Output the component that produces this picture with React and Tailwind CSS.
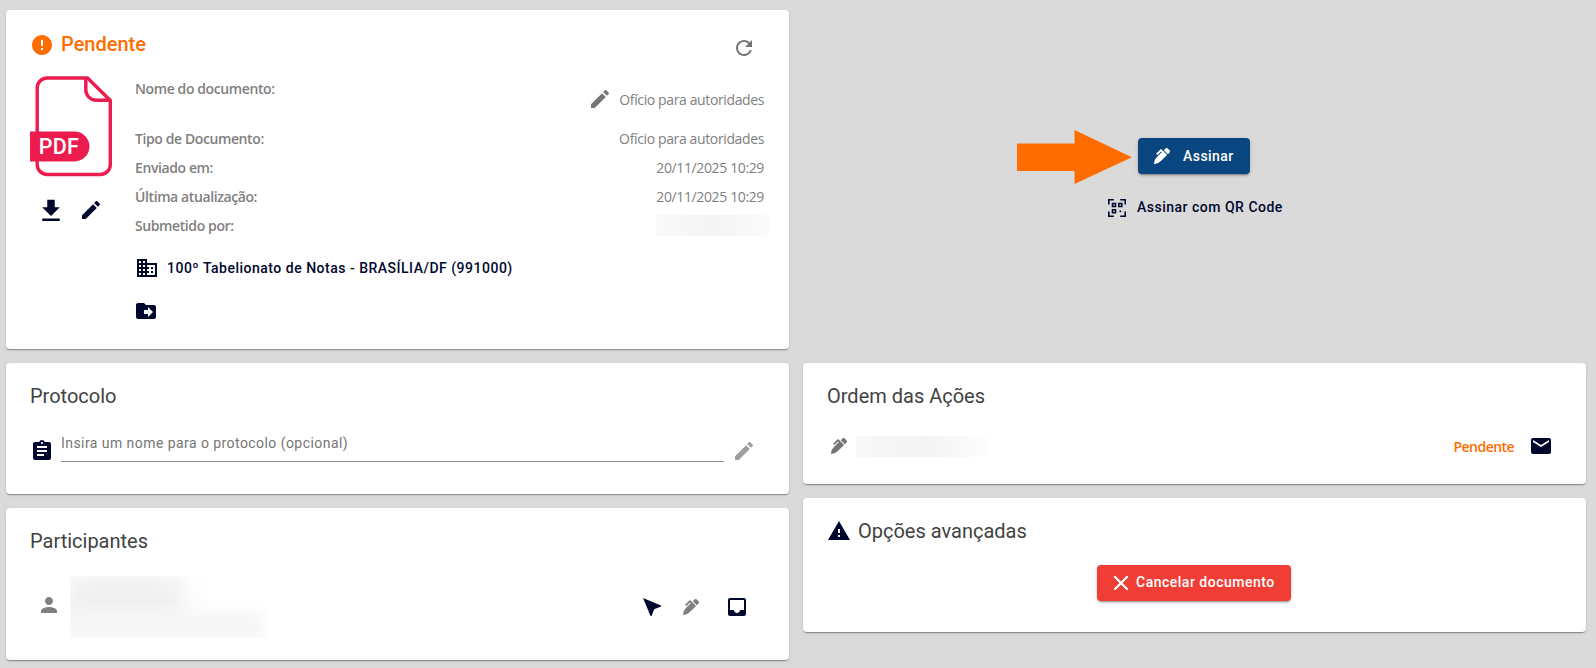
import React from 'react';
import {
    MdError, MdRefresh, MdEdit, MdGetApp, MdBusiness, MdDriveFileMove, MdAssignment,
    MdPerson, MdNearMe, MdInbox, MdMail, MdWarning
} from 'react-icons/md';
import { FaPenAlt } from 'react-icons/fa';

const Card = ({ className = '', children }) => (
    <section className={`rounded-[4px] bg-white shadow-[0_2px_1px_-1px_rgba(0,0,0,0.2),0_1px_1px_0_rgba(0,0,0,0.14),0_1px_3px_0_rgba(0,0,0,0.12)] ${className}`}>
        {children}
    </section>
);

const PdfIcon = () => (
    <svg width="83" height="101" viewBox="0 0 83 101" className="block">
        <path d="M57.5 2H17A10 10 0 0 0 7.2 12V88.5A10 10 0 0 0 17 98.5H70.5A10 10 0 0 0 80.3 88.5V24.5Z" fill="none" stroke="#ec1c4e" strokeWidth="3.4" />
        <path d="M55.8 2V13.5A10.5 10.5 0 0 0 66.3 24.3H80.5" fill="none" stroke="#ec1c4e" strokeWidth="3.4" />
        <path d="M0 55.5H44.5A15 15 0 0 1 44.5 85.5H0Z" fill="#ec1c4e" />
        <text x="8.8" y="78.2" fill="#fff" fontFamily="Roboto, sans-serif" fontSize="21.5" fontWeight="500" letterSpacing="0.2">PDF</text>
    </svg>
);

const QrScanIcon = () => (
    <svg width="18" height="18" viewBox="0 0 18 18" fill="none" stroke="currentColor" strokeWidth="1.6">
        <path d="M.8 5.5V.8H5.8M12.2.8h5V5.5M17.2 12.5v4.7H12.2M5.8 17.2H.8V12.5" />
        <path d="M4.5 4.5h3v3h-3zM10.8 4.5h3v3h-3zM4.5 10.8h3v3h-3z" />
        <path d="M11.4 12.3h1.8" />
    </svg>
);

const CloseIcon = () => (
    <svg width="24" height="24" viewBox="0 0 24 24" fill="none" stroke="currentColor" strokeWidth="2.3" strokeLinecap="round">
        <path d="M6 6L18 18M18 6L6 18" />
    </svg>
);

const Field = ({ label, children }) => (
    <div className="flex h-[29px] items-center justify-between">
        <span className="font-semibold tracking-[-0.4px]">{label}</span>
        {children}
    </div>
);

const DocumentCard = () => (
    <Card className="h-[339px] pt-[22px] pr-[25px] pl-6">
        <header className="flex h-6 items-center justify-between">
            <h2 className="flex items-center gap-[7px] text-[20px] font-medium text-[#ff6d00]">
                <MdError size={24} className="mt-[2px]" />
                Pendente
            </h2>
            <MdRefresh size={24} className="mt-[8px] mr-2 text-[#757575]" />
        </header>

        <div className="mt-5 flex">
            <div className="w-[105px] shrink-0">
                <PdfIcon />
                <div className="mt-[18px] flex items-center gap-[13px] pl-[6px] text-[#00072d]">
                    <MdGetApp size={30} className="mt-px -mb-px" />
                    <MdEdit size={24} />
                </div>
            </div>
            <div className="flex-1 font-['Open_Sans',sans-serif] text-[14px] text-[#808080]">
                <div className="flex h-12 justify-between leading-[26px]">
                    <span className="font-semibold tracking-[-0.4px]">Nome do documento:</span>
                    <span className="flex h-6 items-center gap-[7px] pt-[23px]">
                        <MdEdit size={24} className="-mt-[2px] text-[#757575]" />
                        <span className="tracking-[-0.38px]">Ofício para autoridades</span>
                    </span>
                </div>
                <div className="tracking-[-0.37px]">
                    <Field label="Tipo de Documento:">Ofício para autoridades</Field>
                    <Field label="Enviado em:">20/11/2025 10:29</Field>
                    <Field label="Última atualização:">20/11/2025 10:29</Field>
                    <Field label="Submetido por:">
                        <div className="-mr-[5px] h-[21px] w-[113px] bg-linear-to-r from-[#fafafa] via-[#f4f4f4] to-[#fbfbfb]" />
                    </Field>
                </div>
                <div className="mt-4 flex items-center gap-2 font-[Roboto,sans-serif] font-medium tracking-[0.5px] text-[#00072d]">
                    <MdBusiness size={24} />
                    <span>100º Tabelionato de Notas - BRASÍLIA/DF (991000)</span>
                </div>
                <MdDriveFileMove size={24} className="mt-[19px] -ml-px text-[#00072d]" />
            </div>
        </div>
    </Card>
);

const SignPanel = () => (
    <div className="flex h-[353px] flex-col pt-[120px]">
        <div className="flex items-start gap-[6px] pl-[214px]">
            <svg width="115" height="55" viewBox="0 0 115 55">
                <path d="M0 13.5H57.5V0L115 27.2L57.5 54V41H0Z" fill="#ff6d00" />
            </svg>
            <button className="mt-2 flex h-9 w-[112px] items-center gap-[13px] rounded-[4px] bg-[#09467f] pl-4 text-[14px] font-medium tracking-[0.45px] text-white shadow-[0_3px_1px_-2px_rgba(0,0,0,0.2),0_2px_2px_0_rgba(0,0,0,0.14),0_1px_5px_0_rgba(0,0,0,0.12)]">
                <FaPenAlt size={16} />
                Assinar
            </button>
        </div>
        <button className="mt-3 flex items-center gap-[11px] pl-[305px] text-[14px] font-medium tracking-[0.5px] text-[#00072d]">
            <QrScanIcon />
            Assinar com QR Code
        </button>
    </div>
);

const ProtocolCard = () => (
    <Card className="h-[131px] px-6 pt-[18px]">
        <h2 className="text-[20px] leading-[30px]">Protocolo</h2>
        <div className="mt-[25px] flex h-[26px] items-center">
            <MdAssignment size={24} className="mt-[3px] text-[#00072d]" />
            <div className="ml-[7px] h-[26px] w-[663px] border-b border-[#8c8c8c] text-[14px] leading-[14px] tracking-[0.44px] text-[#757575]">
                Insira um nome para o protocolo (opcional)
            </div>
            <MdEdit size={24} className="mt-[3px] ml-2 text-[#9e9e9e]" />
        </div>
    </Card>
);

const ParticipantsCard = () => (
    <Card className="h-[152px] px-6 pt-[18px]">
        <h2 className="text-[20px] leading-[30px]">Participantes</h2>
        <div className="mt-5 flex h-[62px] items-center">
            <MdPerson size={24} className="-mt-1 ml-[7px] text-[#808080]" />
            {/* hidden name and e-mail */}
            <div className="ml-[9px] h-[62px] w-[198px] overflow-hidden">
                <div className="-ml-1 h-11 w-[118px] bg-[#efefef] blur-[12px]" />
                <div className="-mt-[8px] -ml-1 h-7 w-[198px] bg-[#f5f5f5] blur-[8px]" />
            </div>
            <div className="ml-auto flex items-center pr-4 text-[#00072d]">
                <MdNearMe size={24} className="-scale-x-100" />
                <FaPenAlt size={16} className="ml-[19px] text-[#808080]" />
                <MdInbox size={24} className="ml-[26px]" />
            </div>
        </div>
    </Card>
);

const ActionsCard = () => (
    <Card className="h-[121px] px-6 pt-[18px]">
        <h2 className="text-[20px] leading-[30px]">Ordem das Ações</h2>
        <div className="mt-[23px] flex h-6 items-center">
            <FaPenAlt size={16} className="ml-1 text-[#757575]" />
            <div className="ml-[9px] h-[21px] w-[132px] bg-linear-to-r from-[#f8f8f8] via-[#f3f3f3] to-[#fdfdfd]" />
            <span className="ml-auto font-['Open_Sans',sans-serif] text-[14px] font-semibold tracking-[-0.55px] text-[#ff6d00]">Pendente</span>
            <MdMail size={24} className="mr-[9px] ml-[15px] text-[#00072d]" />
        </div>
    </Card>
);

const AdvancedCard = () => (
    <Card className="h-[134px] px-6 pt-[18px]">
        <h2 className="flex items-center gap-[7px] text-[20px] leading-[30px]">
            <MdWarning size={24} className="text-[#00072d]" />
            Opções avançadas
        </h2>
        <button className="mt-[19px] ml-[270px] flex h-9 w-[194px] items-center gap-[3px] rounded-[4px] bg-[#f03e36] pl-3 text-[14px] font-medium tracking-[0.5px] text-white shadow-[0_3px_1px_-2px_rgba(0,0,0,0.2),0_2px_2px_0_rgba(0,0,0,0.14),0_1px_5px_0_rgba(0,0,0,0.12)]">
            <CloseIcon />
            <span className="-mt-[2px]">Cancelar documento</span>
        </button>
    </Card>
);

const App = () => {
    return (
        <div className="grid h-[668px] w-[1596px] grid-cols-[783px_783px] content-start gap-x-[14px] overflow-hidden bg-[#dadada] pt-[10px] pl-[6px] font-[Roboto,sans-serif] text-[#424242]">
            <div className="flex flex-col gap-[14px]">
                <DocumentCard />
                <ProtocolCard />
                <ParticipantsCard />
            </div>
            <div className="flex flex-col">
                <SignPanel />
                <div className="flex flex-col gap-[14px]">
                    <ActionsCard />
                    <AdvancedCard />
                </div>
            </div>
        </div>
    );
};

export default App;
